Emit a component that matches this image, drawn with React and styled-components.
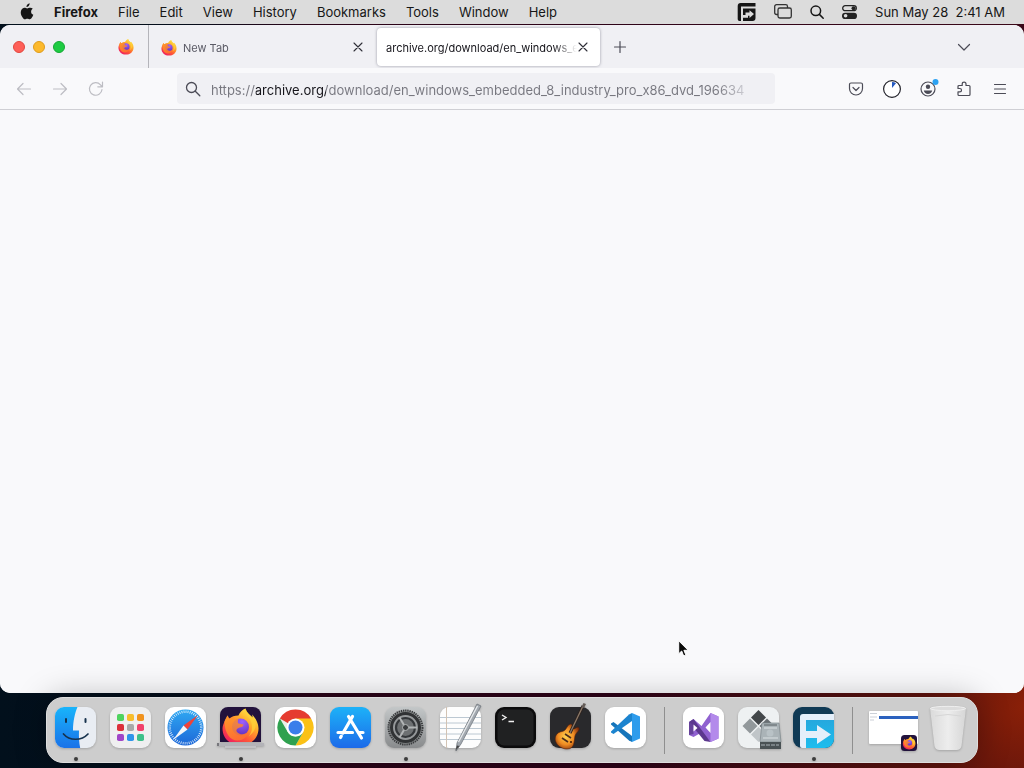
import React from 'react';
import styled, { createGlobalStyle } from 'styled-components';

const GlobalStyle = createGlobalStyle`
  *, *::before, *::after { box-sizing: border-box; }
  body {
    margin: 0;
    font-family: Inter, "Liberation Sans", sans-serif;
    font-size: 13px;
    color: #161616;
  }
  button {
    font: inherit;
    color: inherit;
    border: 0;
    padding: 0;
    margin: 0;
    background: none;
  }
  svg { display: block; overflow: visible; }
`;

const Desktop = styled.div`
  min-height: 100vh;
  display: flex;
  flex-direction: column;
  overflow: hidden;
  background:
    radial-gradient(circle at 100% 92%, #8a2008 0%, rgba(110, 24, 8, 0.7) 8%, rgba(60, 8, 16, 0) 32%),
    linear-gradient(90deg, #02101c 0%, #040d1a 18%, #2a0418 30%, #2e0318 60%, #3a0818 100%);
`;

const MenuBar = styled.header`
  height: 24px;
  display: flex;
  align-items: center;
  padding: 0 19px 1px 20px;
  background: #dcdcdc;
`;

const Menus = styled.nav`
  display: flex;
  align-items: center;
  gap: 20px;
  flex: 1;
`;

const MenuButton = styled.button`
  line-height: 22px;
  font-weight: ${(p) => (p.$strong ? 700 : 400)};
`;

const StatusItems = styled.div`
  display: flex;
  align-items: center;
  gap: 18px;
`;

const Clock = styled.time`
  white-space: pre;
  line-height: 22px;
`;

const Window = styled.main`
  flex: 1;
  display: flex;
  flex-direction: column;
  margin-top: 1px;
  border-radius: 10px;
  overflow: hidden;
  background: #f9f9fb;
`;

const TabStrip = styled.div`
  height: 43px;
  display: flex;
  align-items: center;
  padding: 0 42px 0 13px;
  background: #f0f0f4;
`;

const TrafficLights = styled.div`
  display: flex;
  gap: 8px;
  margin-right: 37px;
`;

const Light = styled.button`
  width: 12px;
  height: 12px;
  border-radius: 50%;
  background: ${(p) => p.$fill};
  border: 1px solid ${(p) => p.$edge};
`;

const PinnedTab = styled.button`
  width: 47px;
  height: 43px;
  padding-left: 16px;
  border-right: 1px solid #b4b4ba;
`;

const Tab = styled.div`
  width: ${(p) => (p.$active ? 223 : 226)}px;
  height: 38px;
  display: flex;
  align-items: center;
  padding: 0 11px 0 ${(p) => (p.$active ? 9 : 12)}px;
  margin-left: ${(p) => (p.$active ? 2 : 0)}px;
  border-radius: 4px;
  font-size: 11px;
  color: ${(p) => (p.$active ? '#15141a' : '#5b5b66')};
  background: ${(p) => (p.$active ? '#ffffff' : 'transparent')};
  box-shadow: ${(p) => (p.$active ? '0 0 3px rgba(90, 90, 110, 0.6)' : 'none')};
`;

const TabLabel = styled.button`
  flex: 1;
  min-width: 0;
  display: flex;
  align-items: center;
  gap: 6px;
  overflow: hidden;
  white-space: nowrap;
  line-height: 20px;
  padding-top: 2px;
  mask-image: linear-gradient(90deg, #000 calc(100% - 24px), transparent 100%);
`;

const IconButton = styled.button`
  width: ${(p) => p.$w || 36}px;
  height: 32px;
  display: grid;
  place-items: center;
  flex: none;
  color: ${(p) => (p.$dim ? '#bdbdc3' : '#4c4c57')};
`;

const CloseButton = styled.button`
  width: 12px;
  height: 20px;
  display: grid;
  place-items: center;
  color: #2f2f38;
`;

const Spacer = styled.div`
  flex: 1;
`;

const Toolbar = styled.div`
  height: 42px;
  display: flex;
  align-items: center;
  padding: 0 6px;
  background: #f9f9fb;
  border-bottom: 1px solid #cfcfd4;
`;

const AddressBar = styled.label`
  flex: 1;
  min-width: 0;
  height: 31px;
  display: flex;
  align-items: center;
  gap: 10px;
  margin: 0 63px;
  padding: 0 6px 0 8px;
  border-radius: 4px;
  background: #f0f0f4;
  color: #4c4c57;
`;

const AddressInput = styled.input`
  flex: 1;
  min-width: 0;
  height: 26px;
  padding: 2px 0 0;
  border: 0;
  outline: 0;
  font: 400 13px/24px Inter, "Liberation Sans", sans-serif;
  color: transparent;
  background: linear-gradient(90deg,
    #77777f 0 45px, #15141a 45px 115px, #77777f 115px calc(100% - 52px), #e0e0e6 calc(100% - 18px));
  background-clip: text;
  -webkit-background-clip: text;
`;

const Page = styled.section`
  flex: 1;
  position: relative;
  background: #f9f9fb;
`;

const Pointer = styled.svg`
  position: absolute;
  left: 678px;
  bottom: 36px;
`;

const Dock = styled.footer`
  position: relative;
  align-self: center;
  height: 66px;
  display: flex;
  align-items: flex-start;
  margin: 4px 0 5px;
  padding: 9px 11px 0 8px;
  border-radius: 17px;
  border: 1px solid #dedede;
  background: #cdcdcd;
  box-shadow: 0 0 32px rgba(0, 0, 0, 0.26);
`;

const DockGroup = styled.div`
  display: flex;
  gap: ${(p) => p.$gap || 14}px;
`;

const DockDivider = styled.div`
  width: 1px;
  height: 47px;
  margin: 0 ${(p) => p.$after || 18}px 0 18px;
  background: #8f8f8f;
`;

const DockItem = styled.button`
  display: flex;
  flex-direction: column;
  align-items: center;
  gap: 9px;
  filter: drop-shadow(0 1px 1px rgba(0, 0, 0, 0.2));
  &::after {
    content: "";
    width: 4px;
    height: 4px;
    border-radius: 50%;
    background: ${(p) => (p.$running ? '#3c3c3c' : 'transparent')};
  }
`;

const Stroke = ({ size = 16, w = 1.2, box = 16, children }) => (
  <svg width={size} height={size} viewBox={`0 0 ${box} ${box}`} fill="none" stroke="currentColor"
    strokeWidth={w} strokeLinecap="round" strokeLinejoin="round" aria-hidden="true">{children}</svg>
);

const AppleLogo = () => (
  <svg width="14" height="17" viewBox="0 0 14 17" fill="#161616" aria-hidden="true">
    <path d="M9.6 0.3c.1 1-.3 1.9-.9 2.6-.6.7-1.400 1.100-2.200 1.100-.1-.9.3-1.900.9-2.500.6-.7 1.500-1.100 2.200-1.200zM12.800 5.800c-1.100.7-1.700 1.600-1.700 2.900 0 1.500.8 2.500 2.200 3.100-.3 1-.8 1.900-1.400 2.700-.6.9-1.200 1.700-2.200 1.700-.9 0-1.300-.5-2.400-.5s-1.500.5-2.400.5c-1 0-1.700-.9-2.300-1.800C.9 12.300.2 9.400 1.200 7.200c.7-1.500 1.900-2.400 3.300-2.400 1.100 0 1.900.6 2.700.6.8 0 1.700-.7 3-.7 1.100.1 2 .5 2.600 1.100z" />
  </svg>
);

const FirefoxShapes = ({ id }) => (
  <>
    <defs>
      <linearGradient id={`${id}f`} x1="0.85" y1="0.05" x2="0.2" y2="0.95">
        <stop offset="0" stopColor="#fff04a" />
        <stop offset="0.35" stopColor="#ffa92a" />
        <stop offset="0.65" stopColor="#ff5a36" />
        <stop offset="1" stopColor="#ee1c62" />
      </linearGradient>
      <linearGradient id={`${id}e`} x1="0" y1="0" x2="1" y2="1">
        <stop offset="0" stopColor="#ffa028" />
        <stop offset="1" stopColor="#ff6a30" />
      </linearGradient>
      <radialGradient id={`${id}p`} cx="0.6" cy="0.2" r="0.9">
        <stop offset="0" stopColor="#9d62ff" />
        <stop offset="1" stopColor="#5b2bb5" />
      </radialGradient>
    </defs>
    <path fill={`url(#${id}f)`} d="M3 13C4 11 5 9 6 7c1 1 1 3 2 3 2-2 5-3 9-3 1-3 4-6 7-7 1 4 4 6 6 8l1 1c0-1 0-2-.5-3 4 4 6.500 9 6.500 14 0 10-8 17-18 17S1 30 1 20c0-2 1-5 2-7z" />
    <circle cx="19" cy="18.500" r="8.500" fill={`url(#${id}p)`} />
    <path fill={`url(#${id}e)`} d="M3 13C4 10 5 9 6 7c1 1 1 3 2 3 3 0 4 0 6 1l3-1c-1 3-1 4 0 5l5 1c0 2-2 3-4 3-3 1-4 3-2 5 3 3 8 2 11-1-1 6-6 9-11 9C9 32 3 25 3 13z" opacity="0.85" />
    <path fill="#ffd038" d="M24 0c-1 5 2 7 4 10 4 6 3 14-1 18 9-6 9-15 3-20-2-2-5-4-6-8z" opacity="0.75" />
  </>
);

const FirefoxMark = ({ id }) => (
  <svg width="16" height="16" viewBox="0 0 38 38" aria-hidden="true"><FirefoxShapes id={id} /></svg>
);

const CloseIcon = () => <Stroke size={10} box={10} w={1.1}><path d="M1 1l8 8M9 1L1 9" /></Stroke>;

const Tile = ({ fill = '#fff', w = 41, children }) => (
  <svg width={w} height="41" viewBox={`0 0 ${w} 41`} aria-hidden="true">
    {fill && <rect width="41" height="41" rx="9" fill={fill} />}
    {children}
  </svg>
);

const Finder = () => (
  <Tile fill="#e9edf3">
    <defs>
      <linearGradient id="finderBlue" x1="0" y1="0" x2="0" y2="1">
        <stop offset="0" stopColor="#18b4fb" /><stop offset="1" stopColor="#1a72e8" />
      </linearGradient>
    </defs>
    <path fill="url(#finderBlue)" d="M9 0h13.500c-2.500 6-4.500 14-4.500 23.500h6c-.3 6 0 12 1.200 17.500H9a9 9 0 0 1-9-9V9a9 9 0 0 1 9-9z" />
    <path d="M11 12v3M30.500 12v3" stroke="#17324d" strokeWidth="2" strokeLinecap="round" />
    <path d="M8.500 27c6 7 18 7 24.500 0" fill="none" stroke="#17324d" strokeWidth="1.700" strokeLinecap="round" />
  </Tile>
);

const launchColors = ['#4fd35e', '#f8bd2c', '#f0921e', '#dc2f3a', '#a8a8a8', '#f1416b', '#a046c8', '#2f94ea', '#3dc08a'];
const Launchpad = () => (
  <Tile fill="#efeff0">
    {launchColors.map((c, i) => (
      <rect key={c} x={7 + (i % 3) * 10} y={7 + Math.floor(i / 3) * 10} width="7" height="7" rx="1.800" fill={c} />
    ))}
  </Tile>
);

const Safari = () => (
  <Tile>
    <defs>
      <linearGradient id="safariBlue" x1="0" y1="0" x2="0" y2="1">
        <stop offset="0" stopColor="#2fa8f2" /><stop offset="1" stopColor="#1d68d8" />
      </linearGradient>
    </defs>
    <circle cx="20.500" cy="20.500" r="18" fill="url(#safariBlue)" />
    <circle cx="20.500" cy="20.500" r="15.800" fill="none" stroke="#fff" strokeWidth="2.500" strokeDasharray="0.700 1.360" />
    <path d="M33 8L18.500 18.500l4 4z" fill="#ee4238" />
    <path d="M8 33l10.500-14.500 4 4z" fill="#f4f6f8" />
  </Tile>
);

const FirefoxApp = () => (
  <Tile fill={null}>
    <path d="M8 0h25a8 8 0 0 1 8 8v27H0V8a8 8 0 0 1 8-8z" fill="#22123c" />
    <clipPath id="ffClip"><rect width="41" height="35" /></clipPath>
    <g clipPath="url(#ffClip)"><g transform="translate(1.500 1.500)"><FirefoxShapes id="ffDock" /></g></g>
    <rect x="-3" y="36" width="47" height="3" fill="#b3b3b8" />
    <rect x="-3" y="36" width="2" height="3" fill="#77777c" />
    <rect x="5" y="39" width="31" height="2" fill="#c2c2c5" />
  </Tile>
);

const Chrome = () => (
  <Tile>
    <circle cx="20.500" cy="20.500" r="18" fill="#e8f0e8" />
    <path d="M20.500 20.500L4.900 11.500A18 18 0 0 1 36.100 11.500z" fill="#e53c30" />
    <path d="M20.500 11.500h15.600A18 18 0 0 1 20.500 38.500l7.800-13.500z" fill="#fbc116" />
    <path d="M4.900 11.500l7.800 13.500a9 9 0 0 0 15.600 0L20.500 38.500A18 18 0 0 1 4.900 11.500z" fill="#2fa14f" />
    <circle cx="20.500" cy="20.500" r="9" fill="#fff" />
    <circle cx="20.500" cy="20.500" r="7" fill="#3a7eea" />
  </Tile>
);

const AppStore = () => (
  <Tile fill="url(#storeBlue)">
    <defs>
      <linearGradient id="storeBlue" x1="0" y1="0" x2="0" y2="1">
        <stop offset="0" stopColor="#1db2f8" /><stop offset="1" stopColor="#1c6ae9" />
      </linearGradient>
    </defs>
    <g stroke="#fff" strokeWidth="3.200" strokeLinecap="round">
      <path d="M22.500 9.500L13 26M18.500 9.500L31.500 31M8 25.500h14.500M28.500 25.500H33M11.300 29.200l-.8 1.300" />
    </g>
  </Tile>
);

const Settings = () => (
  <Tile fill="url(#setGrey)">
    <defs>
      <linearGradient id="setGrey" x1="0" y1="0" x2="0" y2="1">
        <stop offset="0" stopColor="#c3c7c8" /><stop offset="1" stopColor="#898b8d" />
      </linearGradient>
    </defs>
    <circle cx="20.500" cy="20.500" r="17" fill="#8f9293" stroke="#3a3c3e" strokeWidth="2" strokeDasharray="1.400 .8" />
    <circle cx="20.500" cy="20.500" r="14" fill="#96999b" stroke="#303234" strokeWidth="3" />
    <circle cx="20.500" cy="20.500" r="9.500" fill="#6d7072" stroke="#34373a" strokeWidth="2.200" />
    <path d="M20.500 20.500H32M20.500 20.500l-6-10M20.500 20.500l-6 10" stroke="#b2b5b6" strokeWidth="2" />
    <circle cx="20.500" cy="20.500" r="3" fill="#3a3c3e" stroke="#b2b5b6" />
  </Tile>
);

const TextEdit = () => (
  <Tile fill="#fdfdfd">
    <path d="M0 10.500h41M0 16h41M0 21.500h41M0 27h41M0 32.500h41" stroke="#bcc8d2" />
    <path d="M6.500 0v41" stroke="#d2c3b4" />
    <path d="M37-3l4 2-20 38-5 7 1-8z" fill="#a3a9b0" stroke="#686f76" strokeWidth=".7" />
    <path d="M37.500-1L18.500 35" stroke="#e7eaec" strokeWidth="1.300" />
    <path d="M17 38.500l-1.500 5 4-4.500z" fill="#444" />
  </Tile>
);

const Terminal = () => (
  <Tile fill="#0b0b0c">
    <rect x="2.500" y="2.500" width="36" height="36" rx="6.500" fill="#202122" />
    <path d="M7 8l4 2.500L7 13M13.500 14.500h5.500" stroke="#f2f2f2" strokeWidth="1.400" fill="none" />
  </Tile>
);

const GarageBand = () => (
  <Tile fill="#29292c">
    <defs>
      <radialGradient id="guitar" cx=".45" cy=".5" r=".6">
        <stop offset="0" stopColor="#ffd34f" /><stop offset=".55" stopColor="#ef8b22" /><stop offset="1" stopColor="#7c2c0c" />
      </radialGradient>
    </defs>
    <path d="M8 26c3-2 5-1 7-3 2-2 3-6 6-6 2 0 1 4 3 5 2-1 4-3 5-1 1 3-3 4-4 8-1 5 0 13-8 13C8 42 1 32 8 26z" fill="url(#guitar)" stroke="#4d1d0b" strokeWidth=".6" />
    <path d="M20 26L33-1" stroke="#2d2320" strokeWidth="3" />
    <path d="M20 26L33-1" stroke="#8d7a69" strokeWidth="1.300" />
    <path d="M31.500 0l2-4 2.500 1-2 4z" fill="#645c57" />
    <path d="M15 27l6 4M12 31l6 4" stroke="#4b2b1b" strokeWidth="1.600" />
    <circle cx="21" cy="35" r="1" fill="#38170a" />
  </Tile>
);

const VSCode = () => (
  <Tile>
    <path d="M6 16.500L8.500 15 27 29v6L24 33.500 6 17.500z" fill="#1675bb" />
    <path d="M27 6v8L8.500 27 6 25.500V24.500l18-17z" fill="#1c84cf" />
    <path d="M27 6l8 3.500v22L27 35z" fill="#2e9cec" />
  </Tile>
);

const VisualStudio = () => (
  <Tile>
    <path d="M6 15l4.500-3 8 7 9-13 8 3.500v22L27.500 35l-9-9.500-8 4.500L6 28z" fill="#9062d0" />
    <path d="M6 15l4.500-3L27.500 35l-6-1z" fill="#5c388e" />
    <path d="M6 15l4.500 3v9L6 28z" fill="#65419a" />
    <path d="M27.500 6l8 3.500v22L27.500 35z" fill="#b38aeb" />
    <path d="M27.500 15v11l-5-5.500zM10.500 17.500v7l4-3.500z" fill="#fff" />
  </Tile>
);

const BootCamp = () => (
  <Tile fill="#eef1f2">
    <path d="M20.500 3l7.500 7.500-7.500 7.500-7.500-7.500z" fill="#43474a" />
    <path d="M12 11.500l7.500 7.500-7.500 7.500L4.500 19z" fill="#92989b" />
    <path d="M29 11.500l7.500 7.500-7.500 7.500-7.500-7.500z" fill="#686e72" />
    <path d="M20.500 20l7.500 7.500-7.500 7.500-7.500-7.500z" fill="#c0c5c8" />
    <path d="M24 16h17l2 19H22z" fill="#aab3b7" stroke="#7d878b" strokeWidth=".7" />
    <path d="M26 18h13" stroke="#565e62" />
    <path d="M26 21h13M25 31h15" stroke="#dce2e4" />
    <circle cx="32" cy="26" r="3.500" fill="#b9c2c6" />
    <path d="M22 35h21v7H22z" fill="#495154" />
    <path d="M23 38h18" stroke="#aab3b7" strokeDasharray="4 1" />
  </Tile>
);

const RemoteApp = () => (
  <Tile fill="#103a55">
    <defs>
      <linearGradient id="remoteBlue" x1="0" y1="0" x2="0" y2="1">
        <stop offset="0" stopColor="#26a6dc" /><stop offset="1" stopColor="#1dbdee" />
      </linearGradient>
    </defs>
    <path d="M10 10h31v22a9 9 0 0 1-9 9H10z" fill="url(#remoteBlue)" />
    <path d="M41 7v6H13v28H9a2 2 0 0 1-2-2V10a3 3 0 0 1 3-3z" fill="#e4effa" />
    <path d="M13 24h11v-6l14 9.500L24 37v-6H13z" fill="#e4effa" />
  </Tile>
);

const MinimizedWindow = () => (
  <Tile fill={null} w={49}>
    <rect x="0" y="4" width="49" height="33" rx="1" fill="#fff" />
    <rect x="10" y="9" width="39" height="3" fill="#2c62bf" />
    <path d="M1 6.500h7M1 10h7M1 13h4" stroke="#cbd0d8" />
    <rect x="32" y="28" width="16" height="16" rx="3.500" fill="#22123c" />
    <g transform="translate(33.500 29.500) scale(.35)"><FirefoxShapes id="ffMini" /></g>
  </Tile>
);

const Trash = () => (
  <Tile fill={null} w={36}>
    <defs>
      <linearGradient id="bin" x1="0" y1="0" x2="1" y2="0">
        <stop offset="0" stopColor="#dadada" /><stop offset=".5" stopColor="#ededed" /><stop offset="1" stopColor="#d6d6d6" />
      </linearGradient>
    </defs>
    <path d="M0 1q18-4 36 0l-4.500 38q-1 4-5 4h-17q-4 0-5-4z" fill="url(#bin)" />
    <ellipse cx="18" cy="1.500" rx="17.500" ry="2.200" fill="#dcdcdc" stroke="#eeeeee" />
    <path d="M5 9q13-3 26 0" stroke="#d6d6d6" fill="none" />
  </Tile>
);

const menus = ['File', 'Edit', 'View', 'History', 'Bookmarks', 'Tools', 'Window', 'Help'];

const mainApps = [
  ['Finder', Finder, true], ['Launchpad', Launchpad], ['Safari', Safari], ['Firefox', FirefoxApp, true],
  ['Chrome', Chrome], ['App Store', AppStore], ['System Settings', Settings, true], ['TextEdit', TextEdit],
  ['Terminal', Terminal], ['GarageBand', GarageBand], ['Visual Studio Code', VSCode],
];
const recentApps = [
  ['Visual Studio', VisualStudio], ['Boot Camp Assistant', BootCamp], ['Remote Desktop', RemoteApp, true],
];
const places = [['Minimized Firefox window', MinimizedWindow], ['Trash', Trash]];

const DockApps = ({ items, gap }) => (
  <DockGroup $gap={gap}>
    {items.map(([name, Icon, running]) => (
      <DockItem key={name} aria-label={name} $running={running}><Icon /></DockItem>
    ))}
  </DockGroup>
);

export default function App() {
  return (
    <Desktop>
      <GlobalStyle />
      <MenuBar>
        <Menus>
          <MenuButton aria-label="Apple menu"><AppleLogo /></MenuButton>
          <MenuButton $strong>Firefox</MenuButton>
          {menus.map((m) => <MenuButton key={m}>{m}</MenuButton>)}
        </Menus>
        <StatusItems>
          <button aria-label="Remote session">
            <svg width="19" height="18" viewBox="0 0 19 18" aria-hidden="true">
              <path d="M18.500 0v3.400H4V18H2.500A1.800 1.800 0 0 1 .7 16.200V3A3 3 0 0 1 3.700 0z" fill="#161616" />
              <path d="M6 5.400h12.500V15a3 3 0 0 1-3 3H6v-3.200h5V12H6z" fill="#161616" />
              <path d="M8.500 9.500h4V7.200l4.500 3.900-4.500 3.900v-2.300h-4z" fill="#dcdcdc" />
            </svg>
          </button>
          <button aria-label="Displays">
            <svg width="18" height="15" viewBox="0 0 18 15" fill="none" stroke="#333" strokeWidth="1.300" aria-hidden="true">
              <path d="M4 10.500H2.500A1.800 1.800 0 0 1 .7 8.700V2.500A1.800 1.800 0 0 1 2.500.7h9.200a1.800 1.800 0 0 1 1.800 1.800V4" />
              <rect x="4" y="4" width="13.300" height="10" rx="1.800" />
            </svg>
          </button>
          <button aria-label="Spotlight">
            <Stroke size={14} box={14} w={1.5}><circle cx="5.800" cy="5.800" r="4.800" /><path d="M9.400 9.400l3.800 3.800" /></Stroke>
          </button>
          <button aria-label="Control Centre">
            <svg width="15" height="14" viewBox="0 0 15 14" aria-hidden="true">
              <rect x=".7" y=".7" width="13.600" height="5" rx="2.500" fill="none" stroke="#222" strokeWidth="1.300" />
              <circle cx="11.500" cy="3.200" r="2" fill="#222" />
              <rect y="7.700" width="15" height="6.300" rx="3.100" fill="#222" />
              <circle cx="3.600" cy="10.800" r="1.800" fill="#dcdcdc" />
            </svg>
          </button>
          <Clock>Sun May 28  2:41 AM</Clock>
        </StatusItems>
      </MenuBar>

      <Window>
        <TabStrip>
          <TrafficLights>
            <Light aria-label="Close window" $fill="#fe5f58" $edge="#e2463f" />
            <Light aria-label="Minimize window" $fill="#fcb92c" $edge="#df9c1c" />
            <Light aria-label="Zoom window" $fill="#1ecb42" $edge="#15a834" />
          </TrafficLights>
          <PinnedTab aria-label="Firefox View"><FirefoxMark id="ffView" /></PinnedTab>
          <Tab>
            <TabLabel><FirefoxMark id="ffTab" />New Tab</TabLabel>
            <CloseButton aria-label="Close New Tab"><CloseIcon /></CloseButton>
          </Tab>
          <Tab $active>
            <TabLabel>archive.org/download/en_windows_e</TabLabel>
            <CloseButton aria-label="Close archive.org"><CloseIcon /></CloseButton>
          </Tab>
          <IconButton $w={40} aria-label="Open a new tab">
            <Stroke size={12} box={12}><path d="M6 .5v11M.5 6h11" /></Stroke>
          </IconButton>
          <Spacer />
          <IconButton aria-label="List all tabs">
            <Stroke size={12} box={12}><path d="M.5 3.500L6 9l5.500-5.500" /></Stroke>
          </IconButton>
        </TabStrip>

        <Toolbar>
          <IconButton $dim aria-label="Back"><Stroke><path d="M14.500 8h-13M7 2.500L1.500 8 7 13.500" /></Stroke></IconButton>
          <IconButton $dim aria-label="Forward"><Stroke><path d="M1.500 8h13M9 2.500L14.500 8 9 13.500" /></Stroke></IconButton>
          <IconButton $dim aria-label="Reload">
            <Stroke><path d="M14 8.500A6.300 6.300 0 1 1 12.500 3.800L14 5.500M14.500 1v4.800H9.800" /></Stroke>
          </IconButton>
          <AddressBar>
            <Stroke w={1.3}><circle cx="6.500" cy="6.500" r="5" /><path d="M10.300 10.300l4.500 4.500" /></Stroke>
            <AddressInput
              aria-label="Search or enter address"
              defaultValue="https://archive.org/download/en_windows_embedded_8_industry_pro_x86_dvd_196634"
            />
          </AddressBar>
          <IconButton aria-label="Save to Pocket">
            <Stroke><path d="M3 2h10a1.500 1.500 0 0 1 1.500 1.500V7.500a6.500 6.500 0 0 1-13 0V3.500A1.500 1.500 0 0 1 3 2zM5 6.500l3 3 3-3" /></Stroke>
          </IconButton>
          <IconButton aria-label="Downloads">
            <svg width="18" height="18" viewBox="0 0 18 18" aria-hidden="true">
              <circle cx="9" cy="9" r="8.400" fill="#fff" stroke="#23232b" strokeWidth="1.200" />
              <path d="M9 8V2a7 7 0 0 1 4 1.300z" fill="#2459c0" />
            </svg>
          </IconButton>
          <IconButton aria-label="Account">
            <Stroke>
              <circle cx="8" cy="8" r="7" />
              <circle cx="8" cy="5.800" r="2.200" fill="currentColor" stroke="none" />
              <path d="M3.800 9.500h8.400c-.5 2-2 3.500-4.200 3.500s-3.700-1.500-4.200-3.500z" fill="currentColor" stroke="none" />
              <circle cx="15.500" cy="1" r="3" fill="#2da2f2" stroke="none" />
            </Stroke>
          </IconButton>
          <IconButton aria-label="Extensions">
            <Stroke><path d="M3 14.500h10a1 1 0 0 0 1-1v-8a1 1 0 0 0-1-1h-3V3a1.900 1.900 0 0 0-3.800 0v1.500H3a1 1 0 0 0-1 1v2h1.800a1.700 1.700 0 0 1 0 3.400H2v2.600a1 1 0 0 0 1 1z" /></Stroke>
          </IconButton>
          <IconButton aria-label="Open application menu">
            <Stroke size={12} box={12}><path d="M.5 1.500h11M.5 6h11M.5 10.500h11" /></Stroke>
          </IconButton>
        </Toolbar>

        <Page aria-label="Page content">
          <Pointer width="11" height="17" viewBox="0 0 11 17" aria-hidden="true">
            <path d="M.7.800v13l3-2.800 2 5 2.200-1-2-4.700h4.300z" fill="#0a0a0a" stroke="#fff" strokeWidth="1" />
          </Pointer>
        </Page>
      </Window>

      <Dock>
        <DockApps items={mainApps} />
        <DockDivider />
        <DockApps items={recentApps} gap={14} />
        <DockDivider $after={16} />
        <DockApps items={places} gap={12} />
      </Dock>
    </Desktop>
  );
}
